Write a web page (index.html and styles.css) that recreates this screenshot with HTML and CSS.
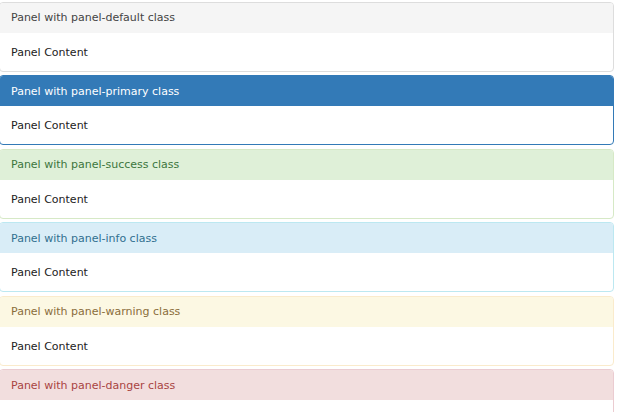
FILE: index.html
```html
<!DOCTYPE html>
<html>
<head>
<meta charset="utf-8">
<link rel="stylesheet" href="styles.css">
</head>
<body>
<div class="stack">
  <div class="panel panel-default"><div class="panel-heading">Panel with panel-default class</div><div class="panel-body">Panel Content</div></div>
  <div class="panel panel-primary"><div class="panel-heading">Panel with panel-primary class</div><div class="panel-body">Panel Content</div></div>
  <div class="panel panel-success"><div class="panel-heading">Panel with panel-success class</div><div class="panel-body">Panel Content</div></div>
  <div class="panel panel-info"><div class="panel-heading">Panel with panel-info class</div><div class="panel-body">Panel Content</div></div>
  <div class="panel panel-warning"><div class="panel-heading">Panel with panel-warning class</div><div class="panel-body">Panel Content</div></div>
  <div class="panel panel-danger"><div class="panel-heading">Panel with panel-danger class</div><div class="panel-body">Panel Content</div></div>
</div>
</body>
</html>
```
FILE: styles.css
```css
html, body { margin: 0; padding: 0; background: #fff; }
body {
  font-family: "DejaVu Sans", sans-serif;
  font-size: 11px;
  color: #333;
  overflow: hidden;
  height: 412px;
}
.stack {
  padding-top: 1.5px;
  margin-left: -1px;
  width: 615px;
  display: flex;
  flex-direction: column;
  gap: 3.5px;
}
.panel {
  border: 1px solid #ddd;
  border-radius: 4px;
  background: #fff;
  overflow: hidden;
}
.panel-heading {
  height: 30px;
  display: flex;
  align-items: center;
  padding-left: 11px;
}
.panel-body {
  height: 38px;
  display: flex;
  align-items: center;
  padding-left: 11px;
  padding-top: 1px;
  box-sizing: border-box;
  color: #222;
}
.panel-default { border-color: #ddd; }
.panel-default .panel-heading { background: #f5f5f5; color: #444; }
.panel-primary { border-color: #337ab7; }
.panel-primary .panel-heading { background: #337ab7; color: #fff; }
.panel-success { border-color: #d6e9c6; }
.panel-success .panel-heading { background: #dff0d8; color: #3c763d; }
.panel-info { border-color: #bce8f1; }
.panel-info .panel-heading { background: #d9edf7; color: #31708f; }
.panel-warning { border-color: #faebcc; }
.panel-warning .panel-heading { background: #fcf8e3; color: #8a6d3b; }
.panel-danger { border-color: #ebccd1; }
.panel-danger .panel-heading { background: #f2dede; color: #a94442; }
```
